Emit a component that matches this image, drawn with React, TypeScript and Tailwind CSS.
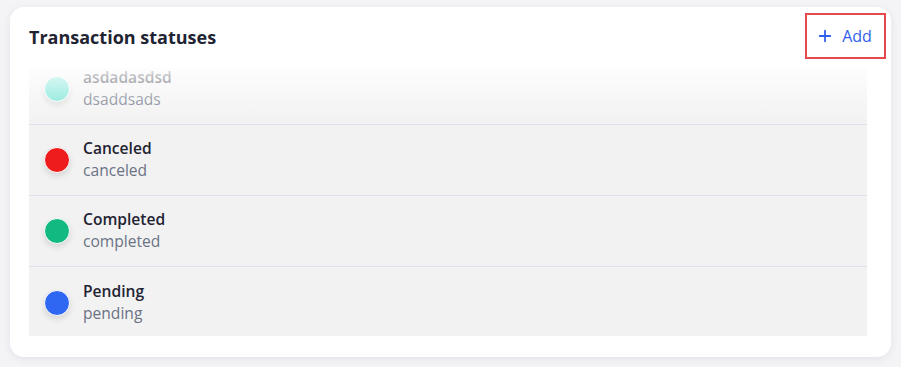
import { Plus } from "lucide-react";

type Status = { name: string; code: string; color: string };

const statuses: Status[] = [
  { name: "asdadasdsd", code: "dsaddsads", color: "bg-[#6fe3d3]" },
  { name: "Canceled", code: "canceled", color: "bg-[#ee1c1c]" },
  { name: "Completed", code: "completed", color: "bg-[#12b981]" },
  { name: "Pending", code: "pending", color: "bg-[#2f66f2]" },
];

const StatusRow = ({ status }: { status: Status }) => (
  <li className="flex h-[71px] items-center gap-[13px] border-b border-[#dce2ec] pl-[15px] last:border-b-0">
    <span className={`h-[26px] w-[26px] shrink-0 rounded-full border-[1.5px] border-white shadow-[0_3px_6px_rgba(0,0,0,0.12)] ${status.color}`} />
    <div className="flex flex-col pb-[2px]">
      <span className="text-[15.6px] font-semibold leading-[22px] text-[#1f2433]">{status.name}</span>
      <span className="text-[15.6px] leading-[22px] text-[#6b7385]">{status.code}</span>
    </div>
  </li>
);

export default function App() {
  return (
    <div className="min-h-[367px] bg-[#f4f4f6] px-[10px] pt-[7px] font-['Open_Sans','Noto_Sans',sans-serif]">
      <div className="h-[350px] w-[881px] rounded-[14px] bg-white shadow-[0_2px_8px_rgba(30,40,80,0.08)]">
        <div className="flex items-center justify-between pl-[19px] pr-[5px] pt-[6px]">
          <h2 className="pt-[3px] text-[18px] font-bold text-[#1f2433]">Transaction statuses</h2>
          <button
            type="button"
            className="flex h-[46px] w-[81px] items-center justify-center gap-[8px] border-2 border-[#e5484d] pr-[3px] text-[16px] font-medium text-[#2f5fea]"
          >
            <Plus size={18} strokeWidth={2.4} />
            Add
          </button>
        </div>
        <div className="relative ml-[19px] mr-[24px] mt-[9px] h-[268px] overflow-hidden bg-[#f2f2f2]">
          <ul className="-mt-[14px]">
            {statuses.map((s) => (
              <StatusRow key={s.name} status={s} />
            ))}
          </ul>
          <div className="pointer-events-none absolute inset-x-0 top-0 h-[56px] bg-gradient-to-b from-white/85 via-white/40 to-transparent" />
        </div>
      </div>
    </div>
  );
}
